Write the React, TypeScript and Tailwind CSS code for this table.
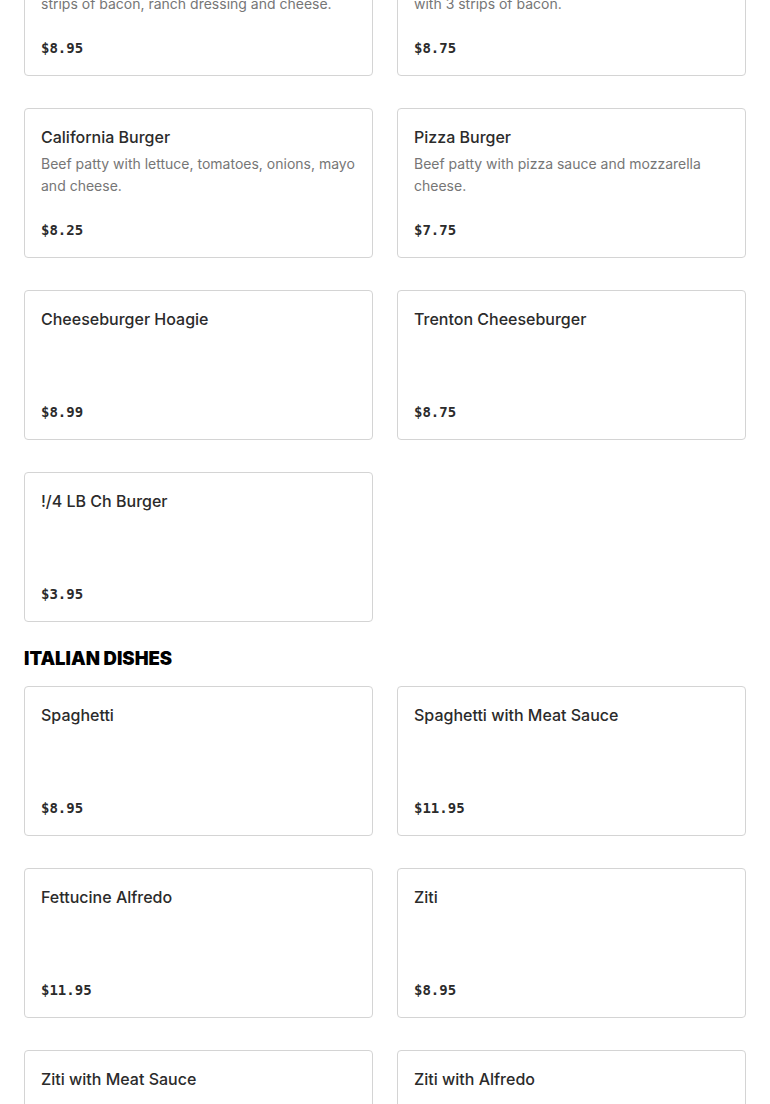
import React from "react";

type Item = { name: string; desc?: string; price: string };

const burgers: Item[] = [
  {
    name: "Bacon Ranch Burger",
    desc: "Beef patty with lettuce, tomatoes, onions, 3\nstrips of bacon, ranch dressing and cheese.",
    price: "$8.95",
  },
  {
    name: "Bacon Cheeseburger",
    desc: "Beef patty with lettuce, tomatoes, and cheese\nwith 3 strips of bacon.",
    price: "$8.75",
  },
  {
    name: "California Burger",
    desc: "Beef patty with lettuce, tomatoes, onions, mayo and cheese.",
    price: "$8.25",
  },
  {
    name: "Pizza Burger",
    desc: "Beef patty with pizza sauce and mozzarella cheese.",
    price: "$7.75",
  },
  { name: "Cheeseburger Hoagie", price: "$8.99" },
  { name: "Trenton Cheeseburger", price: "$8.75" },
  { name: "!/4 LB Ch Burger", price: "$3.95" },
];

const italian: Item[] = [
  { name: "Spaghetti", price: "$8.95" },
  { name: "Spaghetti with Meat Sauce", price: "$11.95" },
  { name: "Fettucine Alfredo", price: "$11.95" },
  { name: "Ziti", price: "$8.95" },
  { name: "Ziti with Meat Sauce", price: "$11.95" },
  { name: "Ziti with Alfredo", price: "$11.95" },
];

function MenuCard({ item }: { item: Item }) {
  return (
    <div className="h-[150px] flex flex-col justify-between rounded border border-[#d4d4d4] bg-white p-4">
      <div>
        <div className="text-base leading-6 font-medium text-[#2b2b2b]">{item.name}</div>
        {item.desc && (
          <div className="mt-1 whitespace-pre-line text-sm leading-[22px] text-[#767676]">{item.desc}</div>
        )}
      </div>
      <div className="font-['DejaVu_Sans_Mono',monospace] text-sm leading-[19px] font-bold text-[#2b2b2b] mb-px">
        {item.price}
      </div>
    </div>
  );
}

export default function App() {
  return (
    <div className="min-h-screen bg-white font-['Inter',sans-serif]">
      <div className="px-6 -mt-[74px] pb-10">
        {/* Burgers */}
        <div className="grid grid-cols-2 gap-x-6 gap-y-8">
          {burgers.map((b) => (
            <MenuCard key={b.name} item={b} />
          ))}
        </div>

        {/* Italian Dishes */}
        <h2 className="mt-6 mb-4 text-[18.5px] leading-6 font-black uppercase text-black">
          Italian Dishes
        </h2>
        <div className="grid grid-cols-2 gap-x-6 gap-y-8">
          {italian.map((b) => (
            <MenuCard key={b.name} item={b} />
          ))}
        </div>
      </div>
    </div>
  );
}
